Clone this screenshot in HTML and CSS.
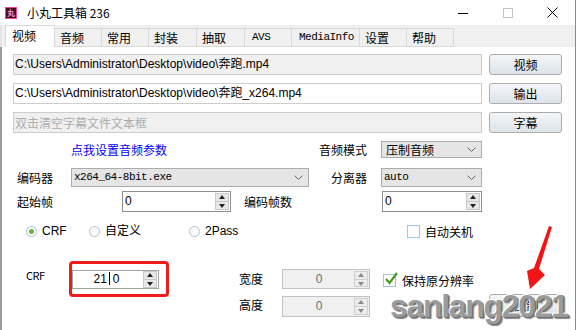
FILE: index.html
```html
<!DOCTYPE html>
<html lang="zh">
<head>
<meta charset="utf-8">
<title>小丸工具箱 236</title>
<link rel="stylesheet" href="styles.css">
</head>
<body>
<div class="win">
  <div class="titlebar">
    <div class="appicon">丸</div>
    <div class="title">小丸工具箱 236</div>
    <div class="ctrls">
      <div class="ctl"><svg width="10" height="10" viewBox="0 0 10 10"><path d="M0 5.5H10" stroke="#000" stroke-width="1"/></svg></div>
      <div class="ctl"><svg width="10" height="10" viewBox="0 0 10 10"><rect x="0.5" y="0.5" width="9" height="9" fill="none" stroke="#c4c4c4"/></svg></div>
      <div class="ctl"><svg width="11" height="11" viewBox="0 0 11 11"><path d="M0.5 0.5L10.5 10.5M10.5 0.5L0.5 10.5" stroke="#000" stroke-width="1"/></svg></div>
    </div>
  </div>
  <div class="tabs">
    <div class="tab sel">视频</div>
    <div class="tab w47">音频</div>
    <div class="tab w47">常用</div>
    <div class="tab w48">封装</div>
    <div class="tab w48">抽取</div>
    <div class="tab w47 mono">AVS</div>
    <div class="tab w68 mono">MediaInfo</div>
    <div class="tab w47">设置</div>
    <div class="tab w47">帮助</div>
  </div>
  <div class="page">
    <div class="row r1">
      <div class="field ro">C:\Users\Administrator\Desktop\video\奔跑.mp4</div>
      <div class="btn">视频</div>
    </div>
    <div class="row r2">
      <div class="field">C:\Users\Administrator\Desktop\video\奔跑_x264.mp4</div>
      <div class="btn">输出</div>
    </div>
    <div class="row r3">
      <div class="field ro ph">双击清空字幕文件文本框</div>
      <div class="btn">字幕</div>
    </div>
    <div class="row r4">
      <div class="link">点我设置音频参数</div>
      <div class="lbl lbl-mode">音频模式</div>
      <div class="combo c-small"><span class="ctext">压制音频</span><svg class="chev" width="9" height="5" viewBox="0 0 9 5"><path d="M0.5 0.5L4.5 4.5L8.5 0.5" fill="none" stroke="#666"/></svg></div>
    </div>
    <div class="row r5">
      <div class="lbl lbl-enc">编码器</div>
      <div class="combo c-enc"><span class="ctext mono">x264_64-8bit.exe</span><svg class="chev" width="9" height="5" viewBox="0 0 9 5"><path d="M0.5 0.5L4.5 4.5L8.5 0.5" fill="none" stroke="#666"/></svg></div>
      <div class="lbl lbl-sep">分离器</div>
      <div class="combo c-small"><span class="ctext mono">auto</span><svg class="chev" width="9" height="5" viewBox="0 0 9 5"><path d="M0.5 0.5L4.5 4.5L8.5 0.5" fill="none" stroke="#666"/></svg></div>
    </div>
    <div class="row r6">
      <div class="lbl lbl-start">起始帧</div>
      <div class="spin s-start"><span class="stext">0</span><div class="ud"><div class="up"></div><div class="dn"></div></div></div>
      <div class="lbl lbl-count">编码帧数</div>
      <div class="spin s-count"><span class="stext">0</span><div class="ud"><div class="up"></div><div class="dn"></div></div></div>
    </div>
    <div class="row r7">
      <div class="radio-item ri1"><span class="radio on"></span><span>CRF</span></div>
      <div class="radio-item ri2"><span class="radio"></span><span>自定义</span></div>
      <div class="radio-item ri3"><span class="radio"></span><span>2Pass</span></div>
      <div class="check-item"><span class="check"></span><span>自动关机</span></div>
    </div>
    <div class="bottom">
      <div class="lbl crf-lbl mono">CRF</div>
      <div class="redbox">
        <div class="spin s-crf"><span class="stext center">21<span class="caret"></span>0</span><div class="ud"><div class="up"></div><div class="dn"></div></div></div>
      </div>
      <div class="lbl w-lbl">宽度</div>
      <div class="spin dis w-spin"><span class="stext center">0</span><div class="ud"><div class="up"></div><div class="dn"></div></div></div>
      <div class="check-item keep"><span class="check"><svg width="15" height="14" viewBox="0 0 15 14"><path d="M2 7L5.5 11L13 1" fill="none" stroke="#4a9a1c" stroke-width="2.2"/></svg></span><span>保持原分辨率</span></div>
      <div class="lbl h-lbl">高度</div>
      <div class="spin dis h-spin"><span class="stext center">0</span><div class="ud"><div class="up"></div><div class="dn"></div></div></div>
      <div class="btn go">压制</div>
    </div>
  </div>
</div>
<div class="watermark">sanlang2021</div>
<svg class="arrow" width="40" height="70" viewBox="0 0 40 70"><polygon points="29,4 32,5 19,47 25,53 10,67 7,49 14,46" fill="#f31515"/></svg>
</body>
</html>
```

FILE: styles.css
```css
html, body {
  margin: 0;
  padding: 0;
}
body {
  width: 579px;
  height: 330px;
  overflow: hidden;
  position: relative;
  background: #ffffff;
  font-family: "Liberation Sans", "Noto Sans CJK SC", sans-serif;
  font-size: 12px;
  color: #000;
}
.mono {
  font-family: "Liberation Mono", "Noto Sans CJK SC", monospace;
  font-size: 11px;
  letter-spacing: -0.5px;
}
.win {
  width: 575px;
  height: 330px;
  border-right: 1px solid #8a8a8a;
  background: #f0f0f0;
}
.titlebar {
  height: 25px;
  background: #ffffff;
  display: flex;
  align-items: center;
}
.appicon {
  width: 10px;
  height: 10px;
  margin-left: 5px;
  border: 1px solid #f0479e;
  background: #3c0f25;
  color: #ff8cc6;
  font-size: 8px;
  line-height: 10px;
  text-align: center;
  font-family: "Noto Sans CJK SC", sans-serif;
  font-weight: bold;
}
.title {
  margin-left: 10px;
  line-height: 16px;
  font-family: "Noto Sans CJK SC", sans-serif;
  font-size: 12px;
}
.ctrls {
  margin-left: auto;
  display: flex;
  height: 25px;
}
.ctl {
  width: 45px;
  height: 25px;
  display: flex;
  align-items: center;
  justify-content: center;
}
.tabs {
  height: 22px;
  display: flex;
  align-items: flex-end;
  padding-left: 3px;
  border-left: 2px solid #e4e4e4;
  box-sizing: border-box;
  width: 575px;
}
.tab {
  box-sizing: border-box;
  height: 19px;
  line-height: 17px;
  padding-left: 5px;
  border-top: 1px solid #d9d9d9;
  border-right: 1px solid #d9d9d9;
  border-bottom: 1px solid #d9d9d9;
  background: #f0f0f0;
  font-family: "Noto Sans CJK SC", sans-serif;
}
.tab.mono {
  font-family: "Liberation Mono", monospace;
  font-size: 11px;
  padding-left: 7px;
  letter-spacing: -0.5px;
}
.tab.sel {
  width: 50px;
  height: 22px;
  line-height: 20px;
  padding-left: 6px;
  background: #ffffff;
  border: 1px solid #d9d9d9;
  border-bottom: none;
}
.w47 { width: 47px; }
.w48 { width: 48px; }
.w68 { width: 68px; }
.page {
  height: 283px;
  background: #ffffff;
  border-left: 2px solid #9a9a9a;
  padding-left: 11px;
  display: flex;
  flex-direction: column;
}
.row {
  display: flex;
  align-items: center;
}
.r1 { margin-top: 7px; }
.r2 { margin-top: 8px; }
.r3 { margin-top: 8px; }
.r4 { margin-top: 8px; height: 17px; }
.r5 { margin-top: 10px; height: 19px; }
.r6 { margin-top: 4px; height: 21px; }
.r7 { margin-top: 12px; height: 15px; }
.field {
  box-sizing: border-box;
  width: 469px;
  height: 21px;
  border: 1px solid #cdcdcd;
  background: #ffffff;
  line-height: 19px;
  padding-left: 1px;
  white-space: nowrap;
  overflow: hidden;
}
.field.ro { background: #f0f0f0; }
.field.ph {
  color: #adadad;
  font-family: "Noto Sans CJK SC", sans-serif;
}
.btn {
  box-sizing: border-box;
  width: 73px;
  height: 21px;
  margin-left: 7px;
  border: 1px solid #acacac;
  border-radius: 3px;
  background: linear-gradient(#f4f6f8, #dde3e9);
  text-align: center;
  line-height: 19px;
  font-family: "Noto Sans CJK SC", sans-serif;
}
.link {
  margin-left: 58px;
  width: 248px;
  color: #0000ff;
  font-family: "Noto Sans CJK SC", sans-serif;
  line-height: 17px;
}
.lbl {
  font-family: "Noto Sans CJK SC", sans-serif;
  line-height: 16px;
}
.lbl-mode { width: 62px; }
.lbl-enc { margin-left: 4px; width: 54px; }
.lbl-sep { margin-left: 22px; width: 50px; }
.lbl-start { margin-left: 4px; width: 105px; }
.lbl-count { margin-left: 13px; width: 138px; }
.combo {
  box-sizing: border-box;
  height: 17px;
  border: 1px solid #acacac;
  background: #e5e5e5;
  display: flex;
  align-items: center;
  position: relative;
}
.r5 .combo { height: 19px; }
.c-small { width: 101px; }
.c-enc { width: 238px; }
.ctext {
  padding-left: 4px;
  font-family: "Noto Sans CJK SC", sans-serif;
  line-height: 15px;
}
.ctext.mono {
  font-family: "Liberation Mono", monospace;
  padding-left: 2px;
}
.chev {
  margin-left: auto;
  margin-right: 5px;
}
.spin {
  box-sizing: border-box;
  height: 21px;
  border: 1px solid #8f8f8f;
  background: #ffffff;
  display: flex;
  align-items: stretch;
  padding: 1px;
}
.s-start { width: 109px; }
.s-count { width: 100px; }
.stext {
  flex: 1;
  line-height: 17px;
  padding-left: 1px;
}
.stext.center {
  text-align: center;
  padding-left: 0;
}
.ud {
  width: 14px;
  display: flex;
  flex-direction: column;
  border: 1px solid #c9c9c9;
  box-sizing: border-box;
  background: #e8e8e8;
}
.up, .dn {
  flex: 1;
  position: relative;
}
.up { border-bottom: 1px solid #c9c9c9; }
.up::after, .dn::after {
  content: "";
  position: absolute;
  left: 3px;
  border-left: 3.5px solid transparent;
  border-right: 3.5px solid transparent;
}
.up::after {
  bottom: 2px;
  border-bottom: 4px solid #222;
}
.dn::after {
  top: 2px;
  border-top: 4px solid #222;
}
.radio-item, .check-item {
  display: flex;
  align-items: center;
  font-family: "Noto Sans CJK SC", sans-serif;
  line-height: 15px;
}
.radio-item span:last-child {
  font-family: "Liberation Sans", "Noto Sans CJK SC", sans-serif;
}
.ri1 { margin-left: 13px; width: 63px; }
.ri2 { width: 100px; }
.ri3 { width: 218px; }
.radio {
  box-sizing: border-box;
  width: 11px;
  height: 11px;
  border-radius: 50%;
  border: 1px solid #a9c2d8;
  background: #fbfbfb;
  margin-right: 5px;
  display: flex;
  align-items: center;
  justify-content: center;
}
.radio.on::after {
  content: "";
  width: 5px;
  height: 5px;
  border-radius: 50%;
  background: #6cb33e;
}
.check {
  box-sizing: border-box;
  width: 13px;
  height: 13px;
  border: 1px solid #99c9e6;
  background: #ffffff;
  margin-right: 5px;
  position: relative;
}
.check svg {
  position: absolute;
  left: 0;
  top: -3px;
}
.bottom {
  margin-top: 22px;
  display: grid;
  grid-template-columns: 56px 100px 70px 43px 88px 13px 106px 75px;
  grid-template-rows: 8px 20px 5px 2px 21px;
}
.crf-lbl {
  grid-column: 1;
  grid-row: 1 / 3;
  align-self: center;
  padding-left: 13px;
}
.redbox {
  grid-column: 2;
  grid-row: 1 / 5;
  box-sizing: border-box;
  width: 100px;
  height: 36px;
  border: 3px solid #f21b1b;
  border-radius: 4px;
  padding-top: 6px;
}
.s-crf {
  width: 87px;
  height: 19px;
  border-color: #a3a3a3;
  padding: 0 1px;
}
.s-crf .stext { line-height: 17px; padding-right: 4px; }
.caret {
  display: inline-block;
  width: 1px;
  height: 13px;
  background: #000;
  vertical-align: -2px;
  margin: 0 3px 0 2px;
}
.w-lbl {
  grid-column: 4;
  grid-row: 2;
  align-self: center;
}
.w-spin {
  grid-column: 5;
  grid-row: 2;
  height: 20px;
}
.dis {
  width: 88px;
  border-color: #c2c2c2;
  background: #f0f0f0;
  color: #6d6d6d;
}
.dis .ud { background: #ececec; border-color: #d0d0d0; }
.dis .up { border-bottom-color: #d0d0d0; }
.dis .up::after { border-bottom-color: #8a8a8a; }
.dis .dn::after { border-top-color: #8a8a8a; }
.keep {
  grid-column: 7;
  grid-row: 2;
  align-self: center;
  margin-top: 2px;
}
.keep .check { margin-right: 6px; }
.h-lbl {
  grid-column: 4;
  grid-row: 5;
  align-self: center;
  margin-top: -4px;
}
.h-spin {
  grid-column: 5;
  grid-row: 5;
  height: 21px;
}
.go {
  grid-column: 8;
  grid-row: 4 / 6;
  margin-left: 0;
  width: 75px;
  height: 23px;
  line-height: 21px;
}
.watermark {
  position: absolute;
  left: 390px;
  top: 286px;
  font-family: "Liberation Sans", sans-serif;
  font-weight: bold;
  font-size: 32px;
  letter-spacing: -1.3px;
  line-height: 40px;
  color: #9b9b9b;
  text-shadow: -1px -1px 0 #ffffff, 1px 1px 0 #6e6e6e, 2px 2px 1px #8a8a8a;
}
.arrow {
  position: absolute;
  left: 520px;
  top: 222px;
}
```
